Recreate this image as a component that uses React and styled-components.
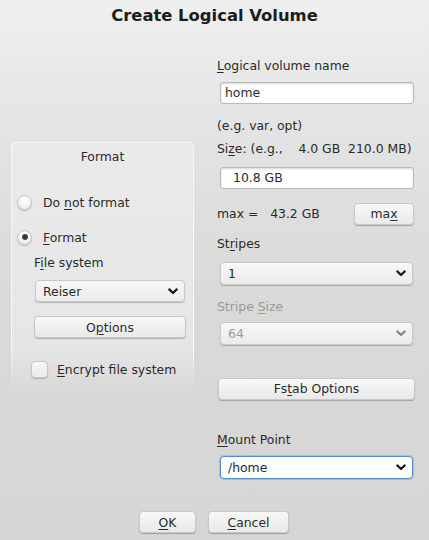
import React from "react";
import styled, { createGlobalStyle } from "styled-components";

const GlobalStyle = createGlobalStyle`
  html, body {
    margin: 0;
    padding: 0;
  }
  body {
    width: 429px;
    height: 540px;
    overflow: hidden;
    font-family: "DejaVu Sans", "Liberation Sans", sans-serif;
    font-size: 12.4px;
    color: #2b2b2b;
    background: linear-gradient(180deg, #efefef 0px, #e3e3e3 140px, #d9d9d8 300px, #d6d6d5 540px);
  }
`;

const Dialog = styled.div`
  width: 429px;
  height: 540px;
  display: flex;
  flex-direction: column;
`;

const Title = styled.h1`
  margin: 0;
  padding-top: 6px;
  height: 36px;
  box-sizing: border-box;
  line-height: 19px;
  text-align: center;
  font-size: 16.4px;
  font-weight: bold;
  color: #1c1c1c;
`;

const Main = styled.div`
  flex: 1;
  display: grid;
  grid-template-columns: 183px 199px;
  column-gap: 23px;
  padding-left: 11px;
  align-items: center;
`;

const Frame = styled.div`
  position: relative;
  height: 252px;
  box-sizing: border-box;
  padding-top: 7px;

  &::before {
    content: "";
    position: absolute;
    inset: 0;
    border-radius: 4px;
    background: linear-gradient(180deg, #eaeaea 0%, #e5e5e5 100%);
    border: 1px solid #f7f7f7;
    border-bottom: none;
    box-shadow: -1px -1px 0 rgba(0, 0, 0, 0.05);
    -webkit-mask-image: linear-gradient(180deg, #000 82%, transparent 100%);
    mask-image: linear-gradient(180deg, #000 82%, transparent 100%);
  }

  & > * {
    position: relative;
  }
`;

const FrameTitle = styled.div`
  text-align: center;
  height: 15px;
  line-height: 15px;
`;

const Col = styled.div`
  display: flex;
  flex-direction: column;
  padding-left: ${(p) => p.$pad || 0}px;
`;

const RadioRow = styled.label`
  display: flex;
  align-items: center;
  gap: 11px;
  margin-top: ${(p) => p.$mt}px;
  padding-left: 6px;
  height: 18px;
`;

const RadioDot = styled.span`
  width: 15px;
  height: 15px;
  border-radius: 50%;
  box-sizing: border-box;
  border: 1px solid #c6c6c6;
  background: radial-gradient(circle at 50% 35%, #ffffff 0%, #f3f3f3 55%, #e4e4e4 100%);
  box-shadow: 0 1px 1px rgba(0, 0, 0, 0.22);
  display: flex;
  align-items: center;
  justify-content: center;

  &::after {
    content: "";
    display: ${(p) => (p.$checked ? "block" : "none")};
    width: 6px;
    height: 6px;
    border-radius: 50%;
    background: radial-gradient(circle, #2e2e2e 0%, #444444 60%, #6a6a6a 100%);
  }
`;

const Text = styled.span`
  color: ${(p) => (p.$dim ? "#9a9a9a" : "#2b2b2b")};
  white-space: pre;
`;

const Label = styled.div`
  color: ${(p) => (p.$dim ? "#9a9a9a" : "#2b2b2b")};
  white-space: pre;
  margin-top: ${(p) => p.$mt || 0}px;
  height: 15px;
  line-height: 15px;
`;

const U = styled.span`
  text-decoration: underline;
  text-underline-offset: 2px;
`;

const Input = styled.div`
  margin-top: ${(p) => p.$mt || 0}px;
  margin-left: 3px;
  width: 194px;
  height: 22px;
  box-sizing: border-box;
  background: #ffffff;
  border: 1px solid #bababa;
  border-radius: 3px;
  box-shadow: inset 0 1px 2px rgba(0, 0, 0, 0.16);
  padding-left: ${(p) => p.$pl || 4}px;
  line-height: 20px;
`;

const SelectBox = styled.div`
  margin-top: ${(p) => p.$mt || 0}px;
  margin-left: ${(p) => p.$ml ?? 3}px;
  width: ${(p) => p.$w || 193}px;
  height: ${(p) => p.$h || 23}px;
  box-sizing: border-box;
  display: flex;
  align-items: center;
  justify-content: space-between;
  padding: 0 6px 0 7px;
  border-radius: 4px;
  color: ${(p) => (p.$disabled ? "#9a9a9a" : "#2b2b2b")};
  background: ${(p) =>
    p.$focus ? "#ffffff" : "linear-gradient(180deg, #f7f7f7 0%, #ececec 100%)"};
  border: 1px solid ${(p) => (p.$focus ? "#5a8bd0" : "#c9c9c9")};
  box-shadow: ${(p) =>
    p.$focus
      ? "0 0 0 1px rgba(110, 160, 225, 0.45)"
      : "0 1px 1px rgba(0, 0, 0, 0.22)"};
`;

const Button = styled.div`
  margin-top: ${(p) => p.$mt || 0}px;
  margin-left: ${(p) => p.$ml || 0}px;
  width: ${(p) => p.$w}px;
  height: 22px;
  box-sizing: border-box;
  display: flex;
  align-items: center;
  justify-content: center;
  border-radius: 4px;
  background: linear-gradient(180deg, #f8f8f8 0%, #e9e9e9 100%);
  border: 1px solid #c8c8c8;
  box-shadow: 0 1px 1px rgba(0, 0, 0, 0.25);
  white-space: pre;
`;

const Check = styled.span`
  width: 17px;
  height: 17px;
  box-sizing: border-box;
  border-radius: 4px;
  border: 1px solid #c6c6c6;
  background: linear-gradient(180deg, #f6f6f6 0%, #ececec 100%);
  box-shadow: 0 1px 1px rgba(0, 0, 0, 0.2);
`;

const CheckRow = styled.label`
  display: flex;
  align-items: center;
  gap: 9px;
  margin-top: ${(p) => p.$mt}px;
  padding-left: 20px;
`;

const MaxRow = styled.div`
  display: flex;
  align-items: center;
  justify-content: space-between;
  margin-top: 14px;
  padding-right: 2px;
  height: 22px;
`;

const Footer = styled.div`
  display: flex;
  justify-content: center;
  gap: 12px;
  padding: 11px 1px 7px 0;
`;

const Chevron = ({ color = "#1a1a1a" }) => (
  <svg width="10" height="7" viewBox="0 0 10 7">
    <path d="M1.3 1.4 L5 5 L8.7 1.4" fill="none" stroke={color} strokeWidth="2.2" strokeLinecap="round" strokeLinejoin="round" />
  </svg>
);

const Select = ({ value, disabled, focus, ...rest }) => (
  <SelectBox $disabled={disabled} $focus={focus} {...rest}>
    <span>{value}</span>
    <Chevron color={disabled ? "#8a8a8a" : "#1a1a1a"} />
  </SelectBox>
);

export default function App() {
  return (
    <>
      <GlobalStyle />
      <Dialog>
        <Title>Create Logical Volume</Title>
        <Main>
          <Frame>
            <FrameTitle>Format</FrameTitle>
            <RadioRow $mt={29}>
              <RadioDot />
              <Text>Do <U>n</U>ot format</Text>
            </RadioRow>
            <RadioRow $mt={17}>
              <RadioDot $checked />
              <Text><U>F</U>ormat</Text>
            </RadioRow>
            <Col $pad={23}>
              <Label $mt={9}>F<U>i</U>le system</Label>
              <Select value="Reiser" $mt={10} $ml={1} $w={150} $h={22} />
              <Button $mt={14} $w={152}>O<U>p</U>tions</Button>
            </Col>
            <CheckRow $mt={23}>
              <Check />
              <Text><U>E</U>ncrypt file system</Text>
            </CheckRow>
          </Frame>

          <Col>
            <Label><U>L</U>ogical volume name</Label>
            <Input $mt={9}>home</Input>
            <Label $mt={14}>(e.g. var, opt)</Label>
            <Label $mt={8}>Si<U>z</U>e: (e.g.,    4.0 GB  210.0 MB)</Label>
            <Input $mt={11} $pl={12}>10.8 GB</Input>
            <MaxRow>
              <Text>max =   43.2 GB</Text>
              <Button $w={60}>ma<U>x</U></Button>
            </MaxRow>
            <Label $mt={11}>St<U>r</U>ipes</Label>
            <Select value="1" $mt={11} />
            <Label $mt={14} $dim>Stripe <U>S</U>ize</Label>
            <Select value="64" $mt={8} disabled />
            <Button $mt={33} $ml={1} $w={197}>Fs<U>t</U>ab Options</Button>
            <Label $mt={32}><U>M</U>ount Point</Label>
            <Select value="/home" $mt={9} focus />
          </Col>
        </Main>
        <Footer>
          <Button $w={57}><U>O</U>K</Button>
          <Button $w={81}><U>C</U>ancel</Button>
        </Footer>
      </Dialog>
    </>
  );
}
